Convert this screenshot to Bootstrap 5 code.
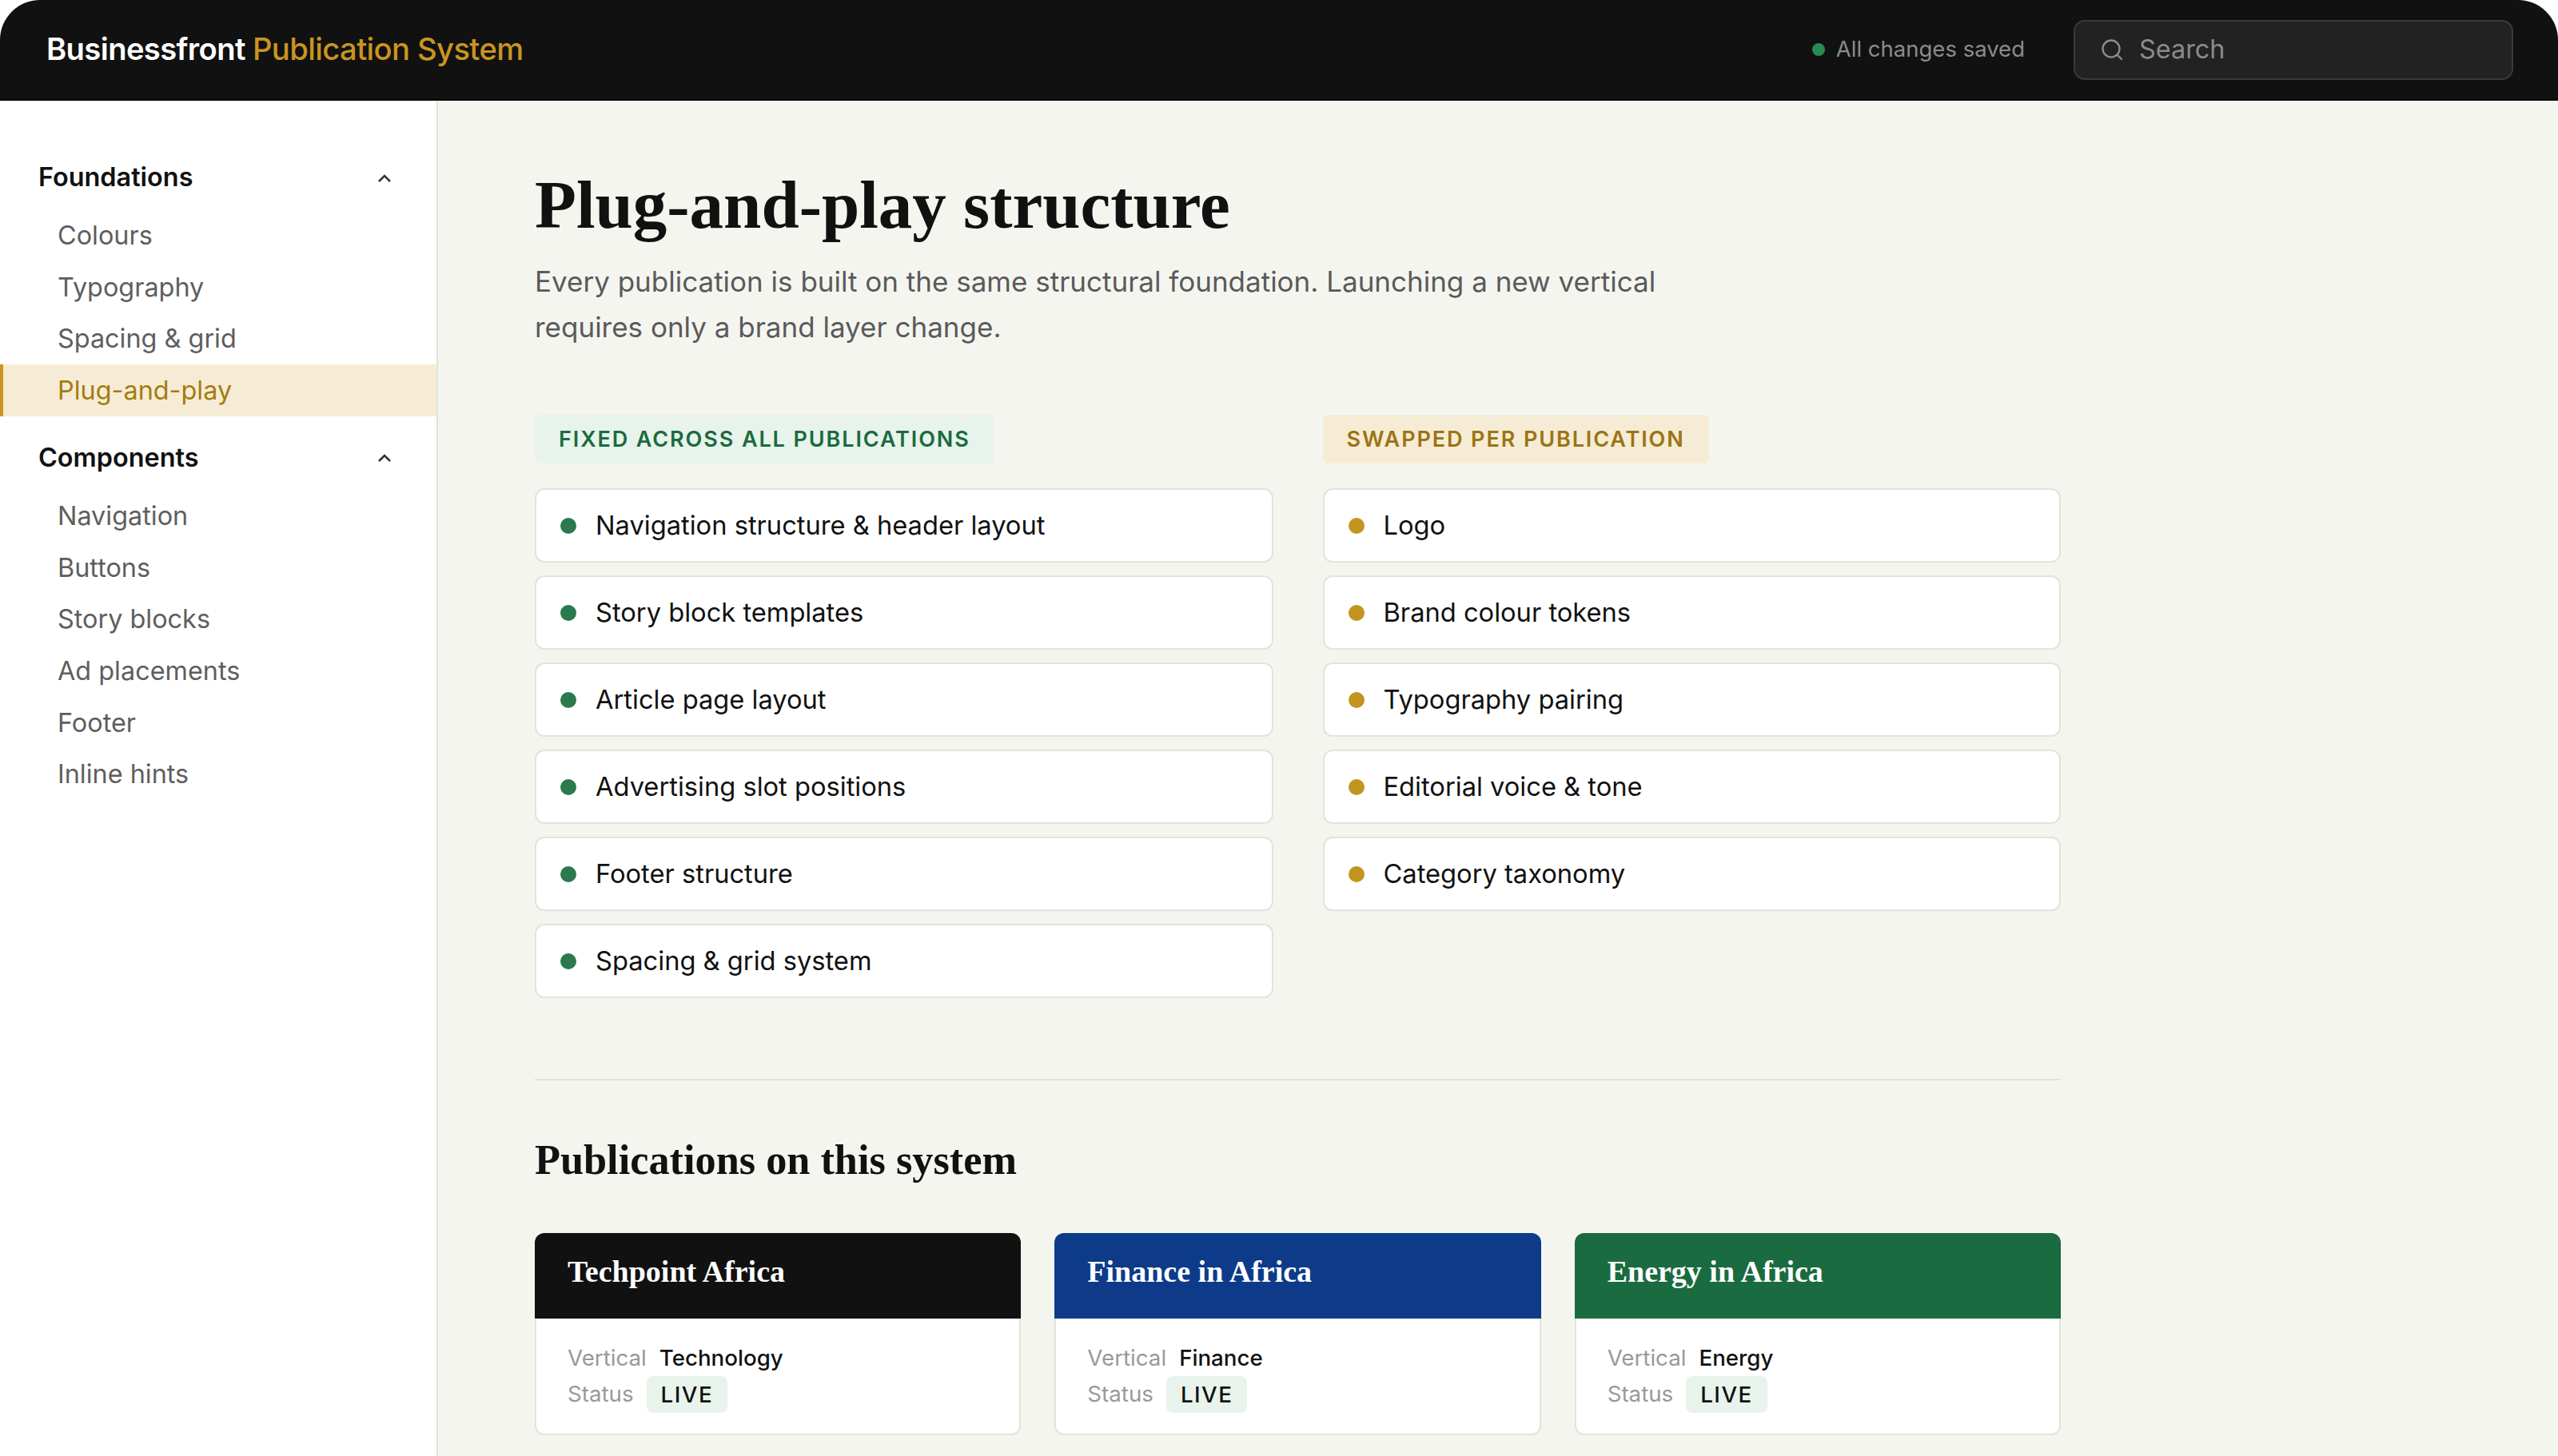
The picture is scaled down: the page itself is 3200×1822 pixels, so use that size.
<!DOCTYPE html>
<html lang="en">
<head>
    <meta charset="UTF-8">
    <meta name="viewport" content="width=device-width, initial-scale=1.0">
    <title>Plug-and-play structure - Businessfront Publication System</title>
    <link href="https://cdn.jsdelivr.net/npm/bootstrap@5.3.0/dist/css/bootstrap.min.css" rel="stylesheet">
    <style>
        html, body { height: 100%; }
        body { background: #fff; font-family: Inter, "Liberation Sans", sans-serif; color: #111; overflow: hidden; }
        .shell { height: 1822px; }
        .topbar { height: 126px; background: #111; border-radius: 50px 50px 0 0; padding: 0 56px 0 58px; border-bottom: 2px solid #000; }
        .brand { font-size: 38.2px; font-weight: 600; letter-spacing: -.6px; color: #fff; }
        .brand span { color: #c9951f; font-weight: 500; }
        .saved { font-size: 27.5px; color: #8b8b8b; gap: 14px; margin-right: 61px; }
        .saved i { width: 16px; height: 16px; border-radius: 50%; background: #2a8a55; }
        .searchbox { width: 550px; height: 75px; background: #222; border: 2px solid #3a3a3a; border-radius: 14px; padding-left: 32px; gap: 20px; color: #8b8b8b; font-size: 32.4px; }
        .side { width: 548px; flex: none; background: #fff; border-right: 2px solid #e2e2dc; padding-top: 64px; }
        .side-head { height: 64px; padding: 1px 56px 0 48px; font-size: 32.4px; font-weight: 600; color: #111; }
        .side-link { display: block; height: 65px; line-height: 65px; padding-left: 72px; font-size: 32.4px; color: #5e5e5e; text-decoration: none; margin-top: -.35px; }
        .side-link.on { background: #f6ecd6; color: #a47c10; box-shadow: inset 4px 0 0 #c9951f; }
        .side-group { margin-bottom: 20px; }
        .side-head + .side-link { margin-top: 8px; }
        .main-area { background: #f5f5f0; padding: 0 0 0 121px; }
        .page-wrap { width: 1909px; }
        .page-title { font-family: "Liberation Serif", serif; font-weight: 700; font-size: 85px; line-height: 1; color: #111; margin: 88px 0 0; }
        .intro { font-size: 35px; line-height: 56.5px; color: #5a5a5a; width: 1440px; margin: 25px 0 0; }
        .two-cols { --bs-gutter-x: 62px; margin-top: 82px; }
        .chip { display: inline-block; height: 61px; line-height: 61px; padding: 0 30px; font-size: 27px; font-weight: 600; letter-spacing: 1.9px; border-radius: 6px; margin-bottom: 31px; }
        .chip-g { background: #e8f3ec; color: #1a6b3f; }
        .chip-y { background: #f6ecd6; color: #9c7413; }
        .item-stack { gap: 16px; }
        .plain-item { height: 93px; background: #fff; border: 2px solid #e3e3dc; border-radius: 12px; padding-left: 30px; gap: 24px; font-size: 32.65px; color: #111; }
        .plain-item i { width: 20px; height: 20px; border-radius: 50%; background: #2a7a4d; flex: none; }
        .plain-item.gold i { background: #c2951f; }
        .rule { border-top: 2px solid #e3e3dc; margin: 101px 0 0; opacity: 1; }
        .sub-title { font-family: "Liberation Serif", serif; font-weight: 700; font-size: 52.3px; line-height: 1; color: #111; margin: 73px 0 0; }
        .pub-row { --bs-gutter-x: 42px; margin-top: 66px; }
        .pub { background: #fff; border: 2px solid #e3e3dc; border-radius: 12px; height: 253px; }
        .pub-head { height: 107px; margin: -2px -2px 0; padding: 20px 41px 0; border-radius: 12px 12px 0 0; font-family: "Liberation Serif", serif; font-weight: 700; font-size: 38px; color: #fff; }
        .pub-body { padding: 27px 39px 0; font-size: 27.7px; }
        .pub-line { height: 45px; gap: 16px; }
        .pub-line span { color: #999; }
        .pub-line b { font-weight: 500; color: #111; }
        .live { height: 46px; line-height: 46px; padding: 0 18px; background: #e8f3ec; border-radius: 8px; letter-spacing: 1.5px; font-weight: 500; color: #111; }
    </style>
</head>
<body>
<div class="shell d-flex flex-column">
    <header class="topbar d-flex align-items-center justify-content-between flex-shrink-0">
        <div class="brand">Businessfront <span>Publication System</span></div>
        <div class="d-flex align-items-center">
            <div class="saved d-flex align-items-center"><i></i>All changes saved</div>
            <div class="searchbox d-flex align-items-center">
                <svg width="28" height="28" viewBox="0 0 28 28" fill="none" stroke="#8b8b8b" stroke-width="2.4" stroke-linecap="round"><circle cx="13" cy="13" r="10.5"/><path d="M21 21l5 5"/></svg>
                <span>Search</span>
            </div>
        </div>
    </header>
    <div class="d-flex flex-grow-1 overflow-hidden">
        <aside class="side">
            <div class="side-group">
                <div class="side-head d-flex align-items-center justify-content-between">Foundations
                    <svg width="18" height="12" viewBox="0 0 18 12" fill="none" stroke="#333" stroke-width="2.6"><path d="M2 10l7-7 7 7"/></svg>
                </div>
                <a class="side-link" href="#">Colours</a>
                <a class="side-link" href="#">Typography</a>
                <a class="side-link" href="#">Spacing &amp; grid</a>
                <a class="side-link on" href="#">Plug-and-play</a>
            </div>
            <div class="side-group">
                <div class="side-head d-flex align-items-center justify-content-between">Components
                    <svg width="18" height="12" viewBox="0 0 18 12" fill="none" stroke="#333" stroke-width="2.6"><path d="M2 10l7-7 7 7"/></svg>
                </div>
                <a class="side-link" href="#">Navigation</a>
                <a class="side-link" href="#">Buttons</a>
                <a class="side-link" href="#">Story blocks</a>
                <a class="side-link" href="#">Ad placements</a>
                <a class="side-link" href="#">Footer</a>
                <a class="side-link" href="#">Inline hints</a>
            </div>
        </aside>
        <main class="main-area flex-grow-1">
            <div class="page-wrap">
                <h1 class="page-title">Plug-and-play structure</h1>
                <p class="intro">Every publication is built on the same structural foundation. Launching a new vertical requires only a brand layer change.</p>

                <div class="row two-cols">
                    <div class="col-6">
                        <div class="chip chip-g">FIXED ACROSS ALL PUBLICATIONS</div>
                        <div class="d-flex flex-column item-stack">
                            <div class="plain-item d-flex align-items-center"><i></i>Navigation structure &amp; header layout</div>
                            <div class="plain-item d-flex align-items-center"><i></i>Story block templates</div>
                            <div class="plain-item d-flex align-items-center"><i></i>Article page layout</div>
                            <div class="plain-item d-flex align-items-center"><i></i>Advertising slot positions</div>
                            <div class="plain-item d-flex align-items-center"><i></i>Footer structure</div>
                            <div class="plain-item d-flex align-items-center"><i></i>Spacing &amp; grid system</div>
                        </div>
                    </div>
                    <div class="col-6">
                        <div class="chip chip-y">SWAPPED PER PUBLICATION</div>
                        <div class="d-flex flex-column item-stack">
                            <div class="plain-item gold d-flex align-items-center"><i></i>Logo</div>
                            <div class="plain-item gold d-flex align-items-center"><i></i>Brand colour tokens</div>
                            <div class="plain-item gold d-flex align-items-center"><i></i>Typography pairing</div>
                            <div class="plain-item gold d-flex align-items-center"><i></i>Editorial voice &amp; tone</div>
                            <div class="plain-item gold d-flex align-items-center"><i></i>Category taxonomy</div>
                        </div>
                    </div>
                </div>

                <hr class="rule">
                <h2 class="sub-title">Publications on this system</h2>

                <div class="row pub-row">
                    <div class="col-4">
                        <div class="pub">
                            <div class="pub-head" style="background:#111">Techpoint Africa</div>
                            <div class="pub-body">
                                <div class="pub-line d-flex align-items-center"><span>Vertical</span><b>Technology</b></div>
                                <div class="pub-line d-flex align-items-center"><span>Status</span><div class="live">LIVE</div></div>
                            </div>
                        </div>
                    </div>
                    <div class="col-4">
                        <div class="pub">
                            <div class="pub-head" style="background:#0d3b8a">Finance in Africa</div>
                            <div class="pub-body">
                                <div class="pub-line d-flex align-items-center"><span>Vertical</span><b>Finance</b></div>
                                <div class="pub-line d-flex align-items-center"><span>Status</span><div class="live">LIVE</div></div>
                            </div>
                        </div>
                    </div>
                    <div class="col-4">
                        <div class="pub">
                            <div class="pub-head" style="background:#1a6b3f">Energy in Africa</div>
                            <div class="pub-body">
                                <div class="pub-line d-flex align-items-center"><span>Vertical</span><b>Energy</b></div>
                                <div class="pub-line d-flex align-items-center"><span>Status</span><div class="live">LIVE</div></div>
                            </div>
                        </div>
                    </div>
                </div>
            </div>
        </main>
    </div>
</div>
<script src="https://cdn.jsdelivr.net/npm/bootstrap@5.3.0/dist/js/bootstrap.bundle.min.js"></script>
</body>
</html>
